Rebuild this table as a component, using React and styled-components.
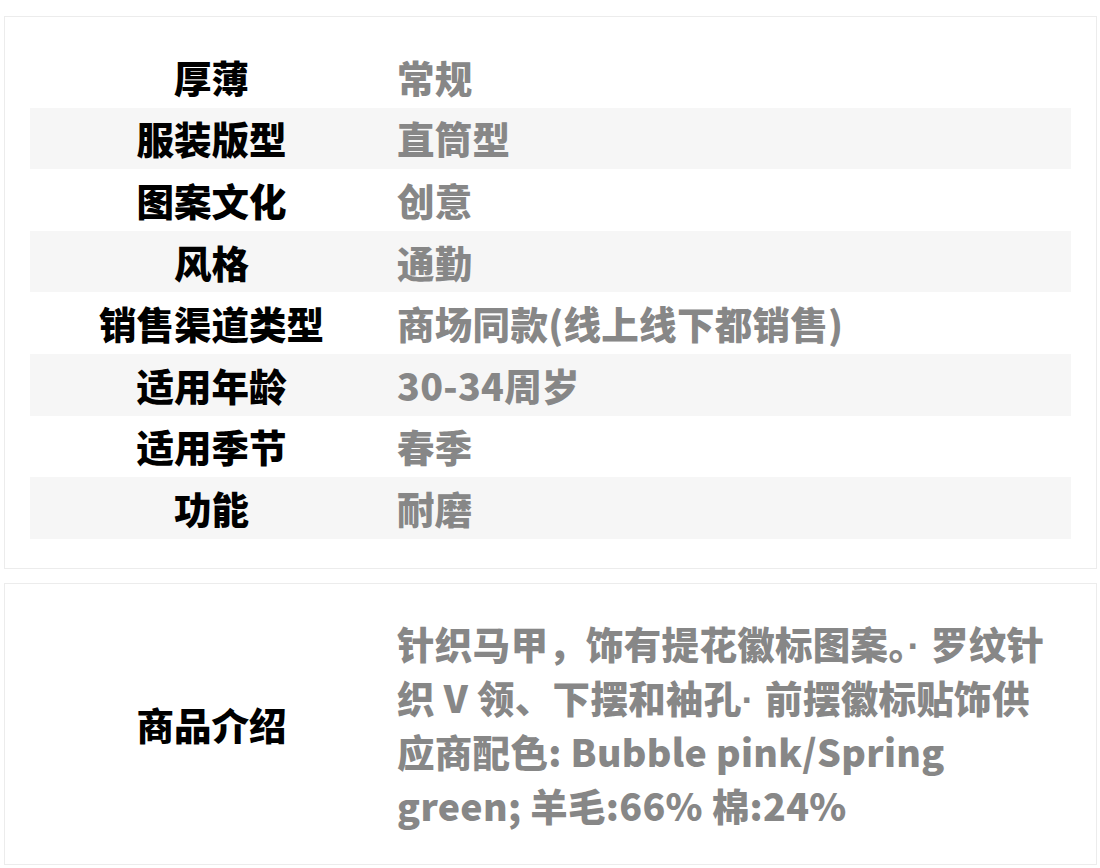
import React from 'react';
import styled, { createGlobalStyle } from 'styled-components';

const GlobalStyle = createGlobalStyle`
  body {
    margin: 0;
    background: #fff;
    font-family: "Noto Sans CJK SC", "Noto Sans", sans-serif;
  }
`;

const Page = styled.div`
  padding: 16px 3px 4px 4px;
  display: flex;
  flex-direction: column;
  gap: 14px;
`;

const Card = styled.div`
  border: 1px solid #ececec;
  padding: ${({ $pad }) => $pad || '29px 25px'};
`;

const Row = styled.div`
  display: grid;
  grid-template-columns: 363px 1fr;
  align-items: center;
  height: ${({ $tall }) => ($tall ? 'auto' : '61.6px')};
  background: ${({ $alt }) => ($alt ? '#f6f6f6' : 'transparent')};
`;

const Label = styled.div`
  text-align: center;
  font-size: 37.5px;
  font-weight: 900;
  color: #000;
  line-height: 54px;
  white-space: nowrap;
`;

const Value = styled.div`
  padding-left: 4px;
  padding-right: 4px;
  font-size: 37.5px;
  font-weight: 900;
  color: #878787;
  line-height: 54px;
  letter-spacing: 0.3px;
`;

const Dot = styled.span`
  font-family: "Liberation Sans", sans-serif;
  font-weight: 700;
  line-height: 0;
`;

const specs = [
  ['厚薄', '常规'],
  ['服装版型', '直筒型'],
  ['图案文化', '创意'],
  ['风格', '通勤'],
  ['销售渠道类型', '商场同款(线上线下都销售)'],
  ['适用年龄', '30-34周岁'],
  ['适用季节', '春季'],
  ['功能', '耐磨'],
];

const App = () => (
  <>
    <GlobalStyle />
    <Page>
      <Card>
        {specs.map(([k, v], i) => (
          <Row key={k} $alt={i % 2 === 1}>
            <Label>{k}</Label>
            <Value>{v}</Value>
          </Row>
        ))}
      </Card>
      <Card $pad="32px 25px 32px">
        <Row $tall>
          <Label>商品介绍</Label>
          <Value>
            针织马甲，饰有提花徽标图案。<Dot>· </Dot>罗纹针织 V 领、下摆和袖孔<Dot>· </Dot>前摆徽标贴饰供应商配色: Bubble pink/Spring green; 羊毛:66% 棉:24%
          </Value>
        </Row>
      </Card>
    </Page>
  </>
);

export default App;
